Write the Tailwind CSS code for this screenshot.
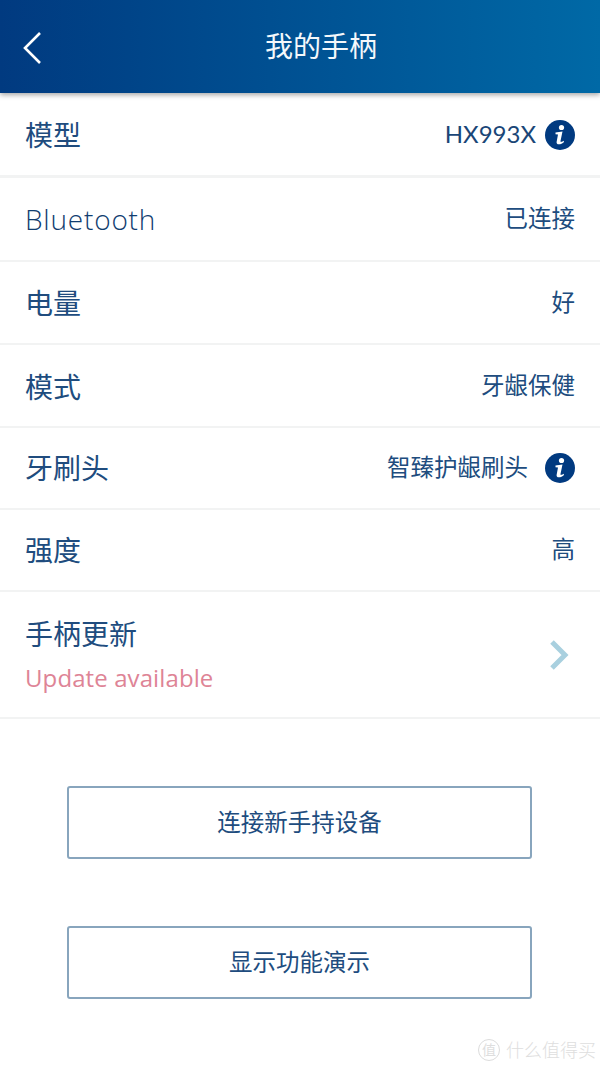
<!DOCTYPE html>
<html lang="zh-CN">

<head>
    <meta charset="UTF-8">
    <meta name="viewport" content="width=device-width, initial-scale=1.0">
    <title>我的手柄</title>
    <script src="https://cdn.jsdelivr.net/npm/@tailwindcss/browser@4"></script>
</head>

<body class="bg-white font-['Open_Sans','Noto_Sans_CJK_SC',sans-serif] text-[#204c7e]">
    <div class="relative w-[600px] h-[1067px] overflow-hidden">
        <!-- Header -->
        <header class="relative z-10 h-[93px] flex items-center pl-[265px] bg-gradient-to-r from-[#013a80] to-[#0069a6] shadow-[0_2px_5px_rgba(0,0,0,0.35)]">
            <svg class="absolute left-[22px] top-[31px]" width="20" height="34" viewBox="0 0 20 34" fill="none">
                <path d="M18 2 L3 17 L18 32" stroke="#fff" stroke-width="2.6" />
            </svg>
            <h1 class="text-[28px] font-normal text-[#f4f8fb] pb-[1px]">我的手柄</h1>
        </header>

        <!-- Rows -->
        <div class="flex flex-col">
            <div class="h-[85px] pt-[1px] flex items-center justify-between pl-[25px] pr-[25px] border-b-[3px] border-[#f2f3f3]">
                <span class="text-[28px]">模型</span>
                <div class="flex items-center gap-[9px]">
                    <span class="font-['Lato'] text-[24px] pb-[2px] text-[#1a4677]">HX993X</span>
                    <svg width="30" height="30" viewBox="0 0 30 30">
                        <circle cx="15" cy="15" r="15" fill="#013a80" />
                        <circle cx="16.5" cy="7.5" r="2.6" fill="#fff" />
                        <path d="M10.5 12.5 L17.5 11.5 L15.5 21 C15.3 22.3 16.4 22.4 18.6 20.8 L19 22 C16.5 24.6 11.2 25.6 11.6 22 L13 14.6 L10.5 14.2 Z" fill="#fff" />
                    </svg>
                </div>
            </div>
            <div class="h-[84px] flex items-center justify-between pl-[25px] pr-[25px] border-b-2 border-[#f2f3f3]">
                <span class="text-[28px] font-light tracking-[0.8px] text-[#113d70]">Bluetooth</span>
                <span class="text-[23.5px]">已连接</span>
            </div>
            <div class="h-[83px] flex items-center justify-between pl-[25px] pr-[25px] border-b-2 border-[#f2f3f3]">
                <span class="text-[28px] pt-[1px]">电量</span>
                <span class="text-[23.5px]">好</span>
            </div>
            <div class="h-[83px] flex items-center justify-between pl-[25px] pr-[25px] border-b-2 border-[#f2f3f3]">
                <span class="text-[28px] pt-[2px]">模式</span>
                <span class="text-[23.5px]">牙龈保健</span>
            </div>
            <div class="h-[82px] flex items-center justify-between pl-[25px] pr-[25px] border-b-2 border-[#f2f3f3]">
                <span class="text-[28px]">牙刷头</span>
                <div class="flex items-center gap-[17px]">
                    <span class="text-[23.5px]">智臻护龈刷头</span>
                    <svg width="30" height="30" viewBox="0 0 30 30">
                        <circle cx="15" cy="15" r="15" fill="#013a80" />
                        <circle cx="16.5" cy="7.5" r="2.6" fill="#fff" />
                        <path d="M10.5 12.5 L17.5 11.5 L15.5 21 C15.3 22.3 16.4 22.4 18.6 20.8 L19 22 C16.5 24.6 11.2 25.6 11.6 22 L13 14.6 L10.5 14.2 Z" fill="#fff" />
                    </svg>
                </div>
            </div>
            <div class="h-[82px] flex items-center justify-between pl-[25px] pr-[25px] border-b-2 border-[#f2f3f3]">
                <span class="text-[28px]">强度</span>
                <span class="text-[23.5px]">高</span>
            </div>
            <div class="h-[127px] flex items-center justify-between pl-[25px] pr-[30px] border-b-2 border-[#f2f3f3]">
                <div class="flex flex-col gap-[8px] pb-[1px]">
                    <span class="text-[28px] leading-[40px]">手柄更新</span>
                    <span class="text-[24px] leading-[32px] tracking-[0.1px] text-[#de8496]">Update available</span>
                </div>
                <svg width="22" height="30" viewBox="0 0 22 30" fill="none">
                    <path d="M4 2 L17 15 L4 28" stroke="#a9d0df" stroke-width="5" />
                </svg>
            </div>
        </div>

        <!-- Buttons -->
        <div class="flex flex-col items-start pl-[67px] gap-[67px] pt-[67px]">
            <button class="w-[465px] h-[73px] rounded-[3px] border-2 border-[#88a5bd] text-[23.5px]">连接新手持设备</button>
            <button class="w-[465px] h-[73px] rounded-[3px] border-2 border-[#88a5bd] text-[23.5px]">显示功能演示</button>
        </div>

        <!-- Watermark -->
        <div class="absolute left-[478px] top-[1038px] flex items-center gap-[6px] text-[#dedede]">
            <span class="w-[22px] h-[22px] rounded-full border border-[#dcdcdc] flex items-center justify-center text-[14px] leading-none">值</span>
            <span class="text-[18px] leading-[24px] font-light">什么值得买</span>
        </div>
    </div>
</body>

</html>
